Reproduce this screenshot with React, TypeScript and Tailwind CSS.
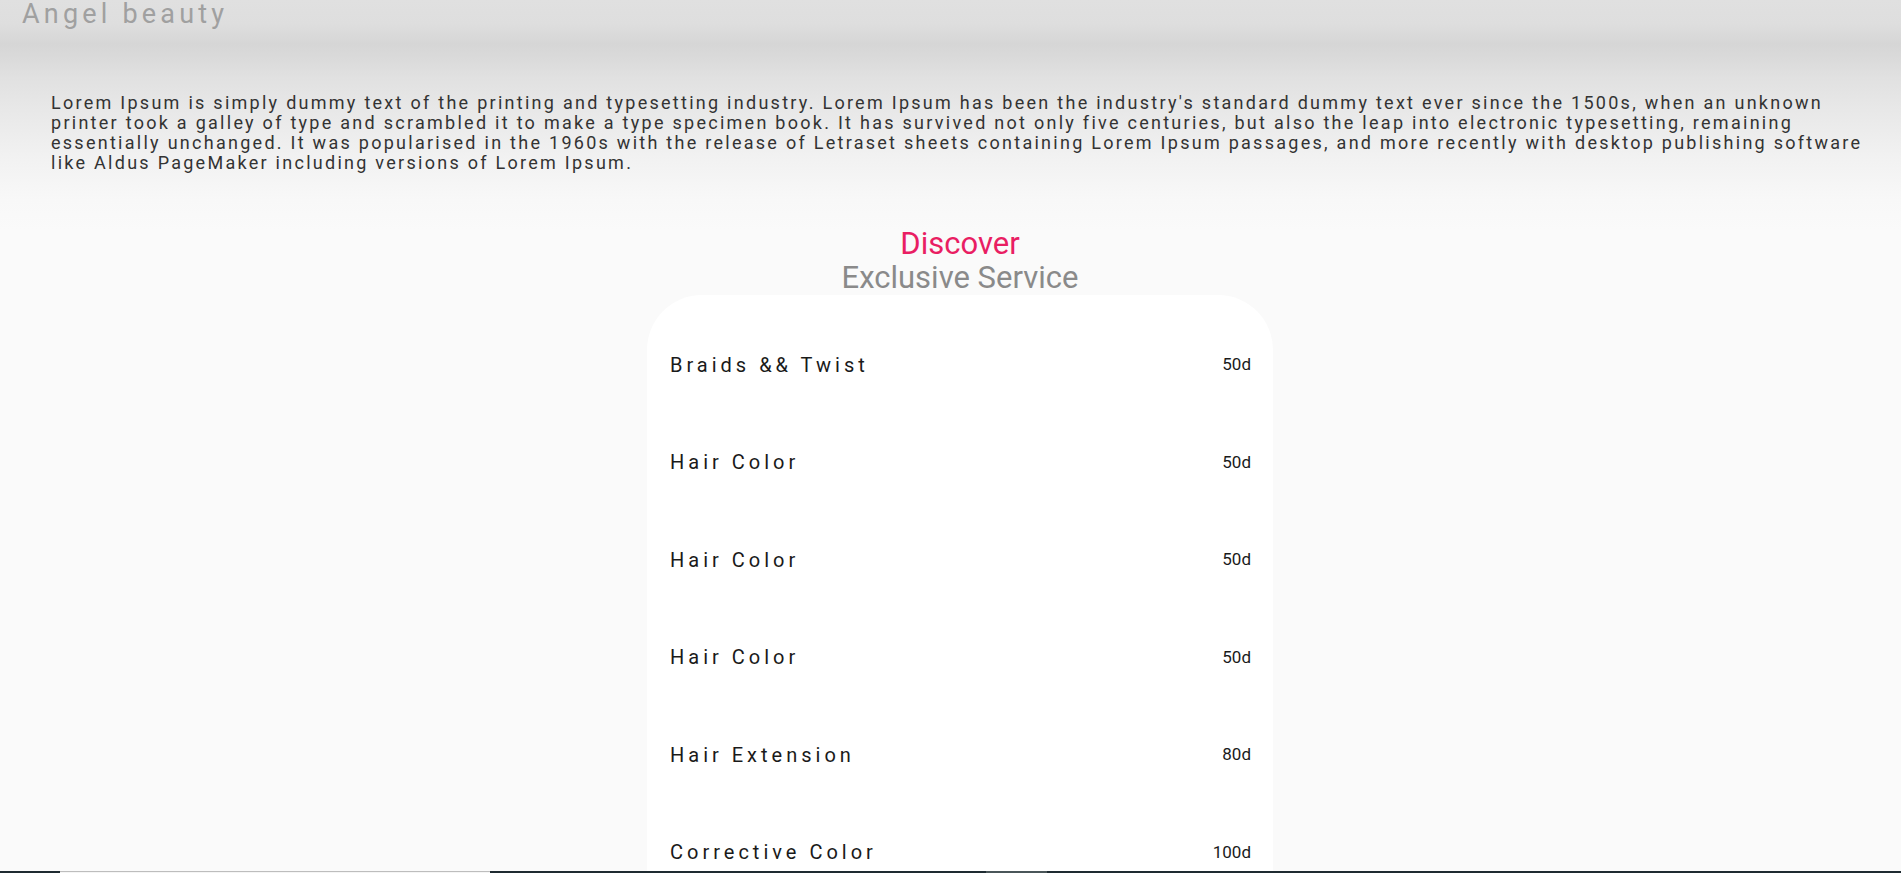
const services = [
  { name: 'Braids && Twist', price: '50d' },
  { name: 'Hair Color', price: '50d' },
  { name: 'Hair Color', price: '50d' },
  { name: 'Hair Color', price: '50d' },
  { name: 'Hair Extension', price: '80d' },
  { name: 'Corrective Color', price: '100d' },
  { name: 'Keratin Treatment', price: '120d' },
]

const intro =
  "Lorem Ipsum is simply dummy text of the printing and typesetting industry. Lorem Ipsum has been the industry's standard dummy text ever since the 1500s, when an unknown printer took a galley of type and scrambled it to make a type specimen book. It has survived not only five centuries, but also the leap into electronic typesetting, remaining essentially unchanged. It was popularised in the 1960s with the release of Letraset sheets containing Lorem Ipsum passages, and more recently with desktop publishing software like Aldus PageMaker including versions of Lorem Ipsum."

export default function App() {
  return (
    <div className="min-h-screen bg-[#fafafa] bg-[linear-gradient(to_bottom,#e0e0e0_0px,#dedede_24px,#d6d6d6_44px,#dadada_58px,#e1e1e1_78px,#e8e8e8_110px,#f1f1f1_155px,#f8f8f8_200px,#fafafa_230px)] font-['Roboto',sans-serif]">
      {/* Header */}
      <header className="h-[34px] pt-[1px]">
        <h1 className="pl-[22px] text-[27px] leading-[27px] tracking-[4.2px] text-[#a0a0a0]">Angel beauty</h1>
      </header>

      {/* Intro */}
      <p className="mt-[59px] pl-[51px] pr-[30px] text-[18px] leading-[20px] tracking-[2.27px] text-[#333333]">{intro}</p>

      {/* Services */}
      <section className="mt-[53px] flex flex-col items-center pl-[19px]">
        <h2 className="text-[31px] leading-[35px] text-[#e91e63]">Discover</h2>
        <h3 className="text-[31px] leading-[34px] text-[#8a8a8a]">Exclusive Service</h3>
        <div className="w-[626px] rounded-t-[55px] bg-white pl-[23px] pr-[22px] pt-[21px] pb-10">
          {services.map((s, i) => (
            <div key={i} className="flex h-[97.5px] items-center justify-between">
              <span className="text-[20px] tracking-[4px] text-[#1a1a1a]">{s.name}</span>
              <span className="text-[17px] text-[#1a1a1a]">{s.price}</span>
            </div>
          ))}
        </div>
      </section>

      {/* Bottom bar peeking in */}
      <div className="fixed bottom-0 left-0 right-0 flex h-[2px] bg-[#1e2b31]">
        <div className="w-[60px]" />
        <div className="w-[430px] border-t border-[#bdbdbd] bg-[#f5f5f5]" />
        <div className="w-[496px]" />
        <div className="w-[61px] bg-[#4a5659]" />
      </div>
    </div>
  )
}
